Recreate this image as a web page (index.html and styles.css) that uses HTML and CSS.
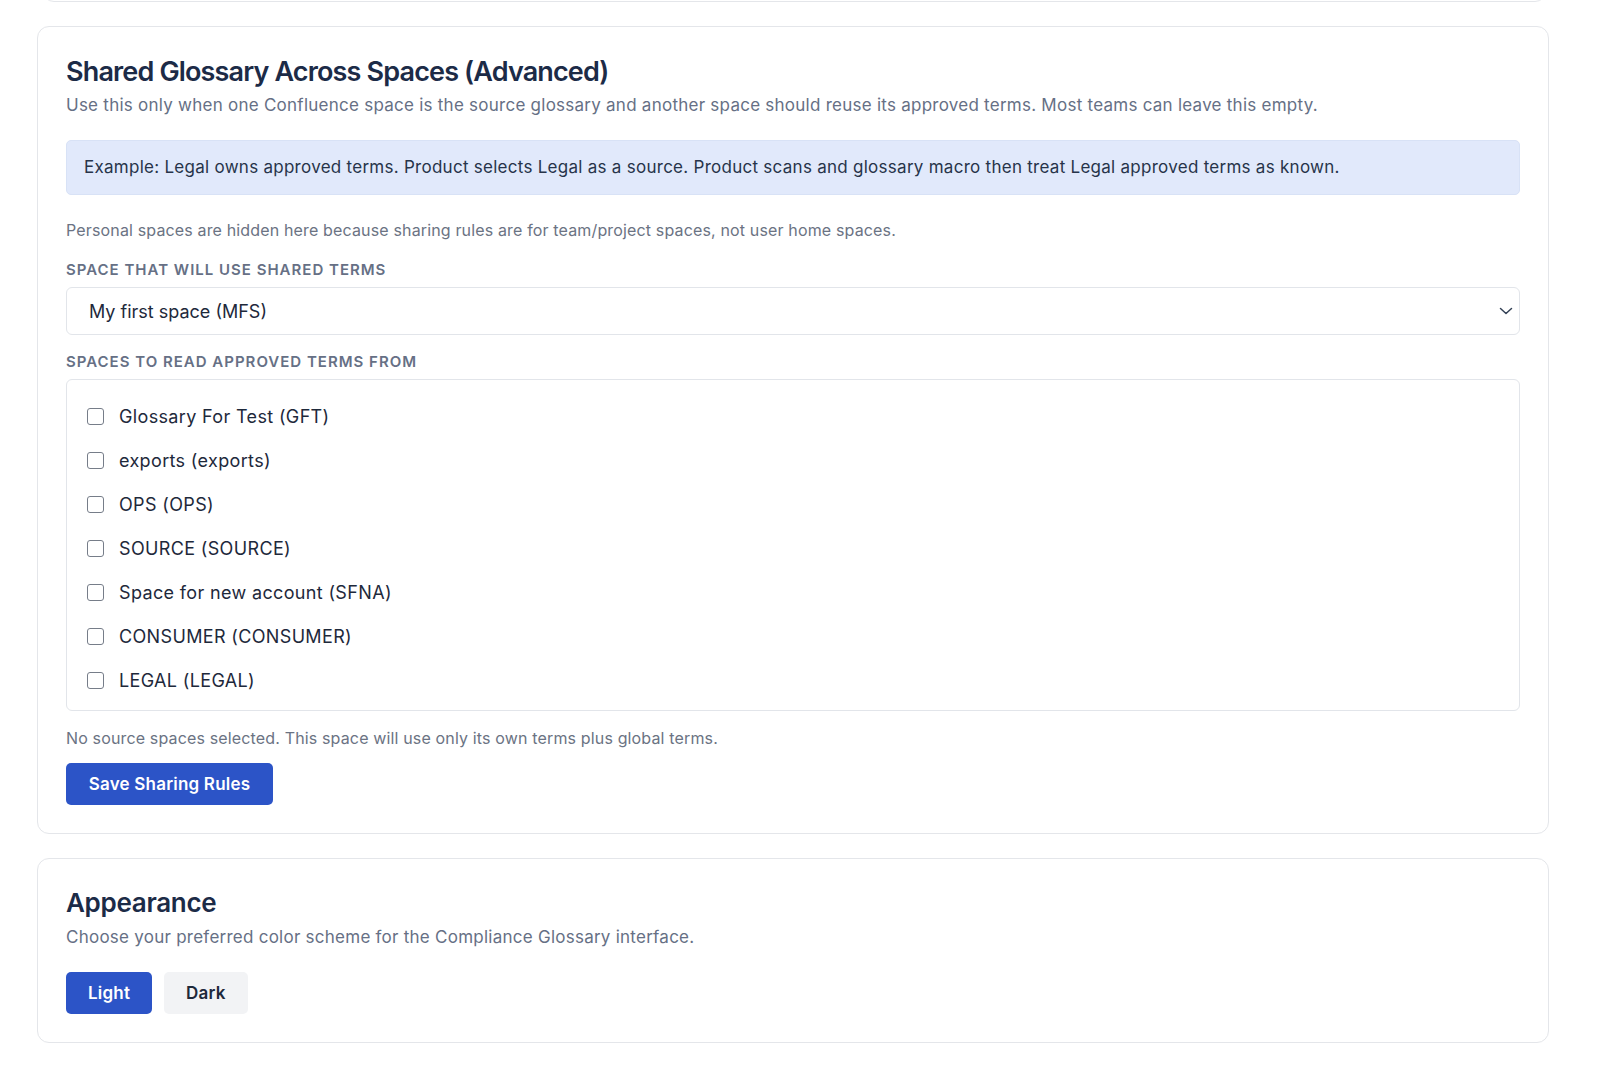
FILE: index.html
```html
<!DOCTYPE html>
<html lang="en">
<head>
<meta charset="utf-8">
<title>Settings</title>
<link rel="stylesheet" href="styles.css">
</head>
<body>
<div class="page">
  <div class="card card-prev"></div>

  <section class="card">
    <h2 class="card-title">Shared Glossary Across Spaces (Advanced)</h2>
    <p class="card-desc">Use this only when one Confluence space is the source glossary and another space should reuse its approved terms. Most teams can leave this empty.</p>

    <div class="info-box">Example: Legal owns approved terms. Product selects Legal as a source. Product scans and glossary macro then treat Legal approved terms as known.</div>

    <p class="hint hint-personal">Personal spaces are hidden here because sharing rules are for team/project spaces, not user home spaces.</p>

    <label class="field-label" for="target-space">Space that will use shared terms</label>
    <div class="select-wrap">
      <select id="target-space" class="select">
        <option>My first space (MFS)</option>
      </select>
      <svg class="select-chevron" width="14" height="8" viewBox="0 0 14 8" aria-hidden="true"><path d="M1.5 1.5 L7 6.5 L12.5 1.5" fill="none" stroke="#334155" stroke-width="1.5" stroke-linecap="round" stroke-linejoin="round"/></svg>
    </div>

    <div class="field-label field-label-list">Spaces to read approved terms from</div>
    <div class="check-list">
      <label class="check-row"><input type="checkbox" class="check"><span>Glossary For Test (GFT)</span></label>
      <label class="check-row"><input type="checkbox" class="check"><span>exports (exports)</span></label>
      <label class="check-row"><input type="checkbox" class="check"><span>OPS (OPS)</span></label>
      <label class="check-row"><input type="checkbox" class="check"><span>SOURCE (SOURCE)</span></label>
      <label class="check-row"><input type="checkbox" class="check"><span>Space for new account (SFNA)</span></label>
      <label class="check-row"><input type="checkbox" class="check"><span>CONSUMER (CONSUMER)</span></label>
      <label class="check-row"><input type="checkbox" class="check"><span>LEGAL (LEGAL)</span></label>
    </div>

    <p class="hint hint-status">No source spaces selected. This space will use only its own terms plus global terms.</p>

    <button class="btn btn-primary btn-save">Save Sharing Rules</button>
  </section>

  <section class="card">
    <h2 class="card-title card-title-sm">Appearance</h2>
    <p class="card-desc card-desc-appearance">Choose your preferred color scheme for the Compliance Glossary interface.</p>
    <div class="theme-row">
      <button class="btn btn-primary btn-theme">Light</button>
      <button class="btn btn-secondary btn-theme">Dark</button>
    </div>
  </section>
</div>
</body>
</html>
```

FILE: styles.css
```css
* { box-sizing: border-box; }

html, body {
  margin: 0;
  padding: 0;
  background: #ffffff;
}

body {
  font-family: Inter, "Noto Sans", "Liberation Sans", sans-serif;
  color: #1e293b;
  height: 1083px;
  overflow: hidden;
}

.page {
  width: 1512px;
  margin-left: 37px;
  margin-top: -199px;
  display: flex;
  flex-direction: column;
  gap: 24px;
}

.card {
  background: #ffffff;
  border: 1px solid #e4e6ea;
  border-radius: 12px;
  padding: 28px;
}

.card-prev {
  height: 201px;
  margin-left: 5px;
  margin-right: 2px;
}

.card-title {
  margin: 0;
  font-size: 27px;
  font-weight: 600;
  line-height: 34px;
  color: #1c2b47;
  letter-spacing: -0.85px;
}

.card-title-sm {
  font-size: 26px;
  line-height: 32px;
  letter-spacing: -0.3px;
}

.card-desc {
  margin: 6px 0 0;
  font-size: 17px;
  line-height: 21px;
  letter-spacing: 0.25px;
  color: #667085;
}

.card-desc-appearance {
  margin-top: 8px;
}

.info-box {
  margin-top: 24px;
  background: #e1e9fb;
  border: 1px solid #d8e2f6;
  border-radius: 5px;
  padding: 14px 17px;
  font-size: 17px;
  line-height: 25px;
  letter-spacing: 0.27px;
  color: #27344a;
}

.hint {
  margin: 0;
  font-size: 16px;
  line-height: 20px;
  letter-spacing: 0.15px;
  color: #6b7383;
}

.hint-personal {
  margin-top: 25px;
}

.hint-status {
  margin-top: 17px;
}

.field-label {
  display: block;
  margin-top: 21px;
  margin-bottom: 8px;
  font-size: 15px;
  line-height: 18px;
  font-weight: 600;
  letter-spacing: 1px;
  text-transform: uppercase;
  color: #667085;
}

.field-label-list {
  margin-top: 18px;
}

.select-wrap {
  position: relative;
}

.select {
  appearance: none;
  -webkit-appearance: none;
  width: 100%;
  height: 48px;
  padding: 0 40px 0 22px;
  font-family: inherit;
  font-size: 18px;
  color: #1e293b;
  background: #ffffff;
  border: 1px solid #e2e5ea;
  border-radius: 6px;
  outline: none;
}

.select-chevron {
  position: absolute;
  right: 7px;
  top: 20px;
}

.check-list {
  border: 1px solid #e2e5ea;
  border-radius: 6px;
  padding: 14px 20px 8px;
  display: flex;
  flex-direction: column;
}

.check-row {
  display: flex;
  align-items: center;
  height: 44px;
  gap: 15px;
  font-size: 18px;
  letter-spacing: 0.35px;
  color: #1e293b;
  cursor: pointer;
}

.check {
  appearance: none;
  -webkit-appearance: none;
  margin: 0;
  width: 17px;
  height: 17px;
  border: 1.5px solid #767d89;
  border-radius: 3px;
  background: #ffffff;
  flex: none;
}

.btn {
  font-family: inherit;
  border: none;
  border-radius: 5px;
  height: 42px;
  font-size: 17px;
  font-weight: 600;
  letter-spacing: 0.2px;
  cursor: pointer;
}

.btn-primary {
  background: #2c54c7;
  color: #ffffff;
}

.btn-secondary {
  background: #f2f3f5;
  color: #1e293b;
}

.btn-save {
  margin-top: 15px;
  align-self: flex-start;
  width: 207px;
  padding: 0;
}

.theme-row {
  margin-top: 24px;
  display: flex;
  gap: 12px;
}

.btn-theme {
  padding: 0 22px;
}
```
